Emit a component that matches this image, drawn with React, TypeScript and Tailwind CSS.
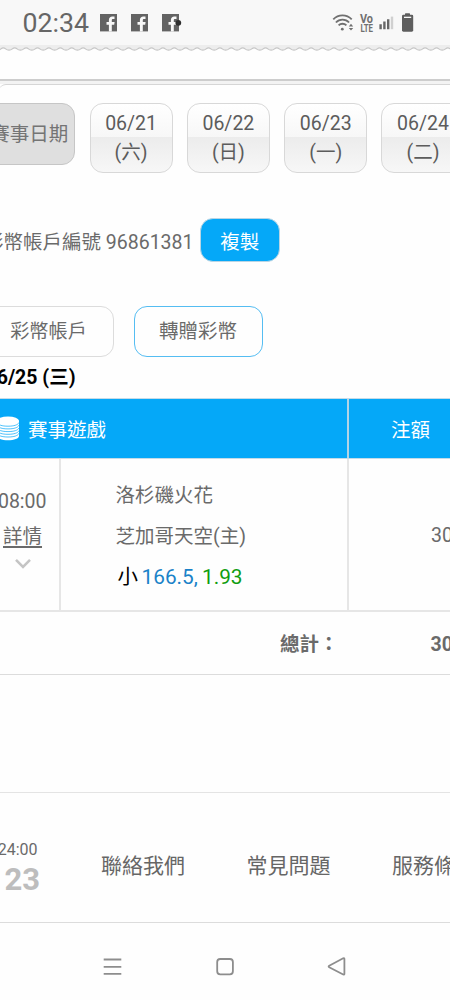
import type { ReactNode } from "react";

const DATES = [
  { date: "06/21", day: "(六)" },
  { date: "06/22", day: "(日)" },
  { date: "06/23", day: "(一)" },
  { date: "06/24", day: "(二)" },
];

const WAVE_STEP = 11.4;

function FacebookIcon({ dot = false }: { dot?: boolean }) {
  return (
    <svg width="20" height="18" viewBox="0 0 20 18" className="block">
      <rect x="0" y="0" width="17" height="17.4" fill="#636363" />
      <path
        d="M8.9 17.4v-6.7H6.5V8h2.4V6.1c0-2.5 1.4-3.7 3.5-3.7h2.1v2.5h-1.4c-1 0-1.3.5-1.3 1.3V8h2.8l-.4 2.7h-2.4v6.7z"
        fill="#f8f8f8"
      />
      {dot && <circle cx="16.3" cy="8.8" r="2.9" fill="#2e2e2e" />}
    </svg>
  );
}

function StatusBar() {
  return (
    <div className="flex h-[45px] items-center bg-[#f8f8f8] text-[#666]">
      <span className="ml-[22.5px] w-[77px] pt-px text-[26.7px] leading-none">02:34</span>
      <div className="flex gap-[11.3px]">
        <FacebookIcon />
        <FacebookIcon />
        <FacebookIcon dot />
      </div>

      <svg width="90" height="22" viewBox="0 0 90 22" className="mr-[34px] ml-auto block">
        {/* wifi */}
        <g fill="none" stroke="#707070" strokeWidth="1.8">
          <path d="M7.3 7.4a12.5 12.5 0 0 1 18.4 0" />
          <path d="M9.9 10.5a9 9 0 0 1 13.2 0" />
          <path d="M12.6 13.4a5.4 5.4 0 0 1 7.8 0" />
        </g>
        <circle cx="16.3" cy="17.2" r="1.4" fill="#707070" />
        <path d="m22.8 14.4 2.2-2.6 2.2 2.6zM22.8 16l2.2 2.6 2.2-2.6z" fill="#707070" />
        {/* volte */}
        <g fill="#707070" fontFamily="Roboto, sans-serif" fontWeight="700">
          <text x="34" y="10.8" fontSize="12" textLength="13" lengthAdjust="spacingAndGlyphs">
            Vo
          </text>
          <text x="34.4" y="20" fontSize="11.8" textLength="12.6" lengthAdjust="spacingAndGlyphs">
            LTE
          </text>
        </g>
        {/* signal */}
        <path d="M53.4 12.2h2.4v5h-2.4zM57.2 9.5h2.4v7.7h-2.4zM61 7.2h2.4v10H61z" fill="#666" />
        <path d="M64.8 4.6h2.4v12.6h-2.4z" fill="#d0d0d0" />
        {/* battery */}
        <rect x="79" y="1.2" width="5" height="3" rx="0.6" fill="#5e5e5e" />
        <rect x="76" y="2.7" width="11.2" height="17" rx="1.4" fill="#5e5e5e" />
        <rect x="78" y="4.7" width="7.2" height="1.3" fill="#f8f8f8" />
      </svg>
    </div>
  );
}

function WaveEdge() {
  let d = `M${9 - WAVE_STEP * 2} 5.2`;
  for (let i = -2; i < 40; i++) {
    const x = 9 + i * WAVE_STEP;
    d += ` C${x + 3.4} 5.2 ${x + 3.2} 2.8 ${x + WAVE_STEP / 2} 2.8`;
    d += ` S${x + 8} 5.2 ${x + WAVE_STEP} 5.2`;
  }
  return (
    <svg width="450" height="7" viewBox="0 0 450 7" className="block">
      <path d={`${d} V0 H-14 Z`} fill="#ededed" />
      <path d={d} fill="none" stroke="#c6c6c6" strokeWidth="1.2" />
    </svg>
  );
}

function DateTab({ date, day }: { date: string; day: string }) {
  return (
    <button
      type="button"
      className="flex h-[69.5px] w-[83px] shrink-0 flex-col items-center rounded-[13px] border border-[#d8d8d8] bg-[linear-gradient(#ffffff_0%,#f7f7f7_49%,#ececec_49%,#f7f7f7_100%)] pt-[6px] leading-[28px] text-[#5c5c5c]"
    >
      <span>{date}</span>
      <span className="pt-px">{day}</span>
    </button>
  );
}

function CoinsIcon() {
  return (
    <svg width="22" height="25" viewBox="0 0 22 25" className="block shrink-0">
      <path d="M0 4.5V20c0 2.4 4.9 4.3 11 4.3S22 22.4 22 20V4.5z" fill="#fff" />
      <g fill="none" stroke="#05a8f8" strokeWidth="0.7">
        <path d="M0 6.5c1 2.4 5 3.7 11 3.7s10-1.3 11-3.7" />
        <path d="M0 9.2c1 2.4 5 3.7 11 3.7s10-1.3 11-3.7" />
        <path d="M0 11.9c1 2.4 5 3.7 11 3.7s10-1.3 11-3.7" />
        <path d="M0 14.6c1 2.4 5 3.7 11 3.7s10-1.3 11-3.7" />
        <path d="M0 17.3c1 2.4 5 3.7 11 3.7s10-1.3 11-3.7" />
      </g>
      <ellipse cx="11" cy="4.7" rx="11" ry="4.3" fill="#fff" />
    </svg>
  );
}

function FooterLink({ children }: { children: ReactNode }) {
  return <a className="shrink-0 text-[21px] leading-[30px] text-[#666]">{children}</a>;
}

function BetTable() {
  return (
    <div>
      <div className="flex h-[61px] border-t border-b border-[#c4dbe8] bg-[#05a8f8] text-white">
        <div className="flex w-[349px] shrink-0 items-center gap-[9.5px] border-r-2 border-[#b4d4e6]">
          <div className="-ml-[3.5px]">
            <CoinsIcon />
          </div>
          <span className="pt-[5px]">賽事遊戲</span>
        </div>
        <div className="flex w-[123px] shrink-0 items-center justify-center pt-[5px]">注額</div>
      </div>

      <div className="flex h-[152.5px] border-b-2 border-[#e6e6e6]">
        <div className="flex w-[60.5px] shrink-0 flex-col border-r-2 border-[#e6e6e6] pt-[26px]">
          <div className="flex w-full justify-end pr-[12px] leading-[34px]">08:00</div>
          <div className="w-full pt-px pl-[3px] leading-[34px] underline decoration-[1.5px] underline-offset-[3px]">
            詳情
          </div>
          <svg width="18" height="12" viewBox="0 0 18 12" className="mt-[4px] ml-[13.5px] block">
            <path d="m2 1.8 7 7 7-7" fill="none" stroke="#c4c4c4" strokeWidth="2.6" />
          </svg>
        </div>
        <div className="w-[288.5px] shrink-0 border-r-2 border-[#e6e6e6] pt-[16px] pl-[55px] leading-[41.2px]">
          <div>洛杉磯火花</div>
          <div>芝加哥天空(主)</div>
          <div className="flex pl-[2px] text-[20.8px]">
            <span className="w-[24px] text-[20.5px] text-black">小</span>
            <span className="w-[60.5px] text-[#1a82c8]">166.5,</span>
            <span className="text-[#0f9d0f]">1.93</span>
          </div>
        </div>
        <div className="flex items-center pt-[2px] pl-[82px]">30</div>
      </div>

      <div className="flex h-[63.5px] items-center border-b border-[#dcdcdc] pt-[4px] font-bold">
        <span className="w-[430.5px] shrink-0 pl-[280px]">總計：</span>
        <span>30</span>
      </div>
    </div>
  );
}

function NavBar() {
  return (
    <div className="flex h-[77px] items-center pt-[10px]">
      <svg width="450" height="24" viewBox="0 0 450 24" fill="none" stroke="#8d8d8d" className="block">
        <path d="M103.7 4.5h17.6M103.7 11.8h17.6M103.7 18.9h17.6" strokeWidth="1.8" />
        <rect x="217.2" y="4" width="15.7" height="15.3" rx="3" strokeWidth="1.8" />
        <path
          d="M343.2 3.3 329.2 10.7q-1.2.8 0 1.6l14 7.2q1.2.4 1.2-.8V4.1q0-1.2-1.2-.8z"
          strokeWidth="1.8"
          strokeLinejoin="round"
        />
      </svg>
    </div>
  );
}

export default function App() {
  return (
    <div className="h-[1000px] w-[450px] overflow-hidden bg-[#fefefe] font-['Roboto','Noto_Sans_CJK_TC',sans-serif] text-[19.5px] text-[#6a6a6a]">
      <StatusBar />
      <WaveEdge />

      <div className="mt-[27px] h-[5px] border-t-2 border-[#cdcdcd] bg-[#f3f3f3]">
        <div className="mt-[3px] -ml-px h-[12px] rounded-tl-[7px] border-t border-[#d6d6d6] bg-[#fefefe]" />
      </div>

      {/* match dates */}
      <div className="mt-[19px] flex h-[70px] gap-[14.3px]">
        <button
          type="button"
          className="-ml-[17px] flex h-[62px] w-[92.3px] shrink-0 items-center justify-center rounded-[13px] border border-[#c6c6c6] bg-[#dfdfdf] pt-px whitespace-nowrap text-[#747474]"
        >
          賽事日期
        </button>
        {DATES.map((item) => (
          <DateTab key={item.date} date={item.date} day={item.day} />
        ))}
      </div>

      {/* account number */}
      <div className="mt-[45px] flex h-[44px] items-center">
        <div className="flex w-[193.5px] shrink-0 justify-end pt-[5px] whitespace-nowrap">
          彩幣帳戶編號 96861381
        </div>
        <button
          type="button"
          className="ml-[6.5px] h-[44px] w-[79.5px] rounded-[13px] border border-[#b9d5e4] bg-[#05a8f8] pt-[5px] text-white"
        >
          複製
        </button>
      </div>

      <div className="mt-[44px] flex h-[51px] gap-[19.5px]">
        <button
          type="button"
          className="-ml-[17px] w-[131px] shrink-0 rounded-[13px] border border-[#dcdcdc] pt-px text-[19.2px]"
        >
          彩幣帳戶
        </button>
        <button
          type="button"
          className="w-[129px] shrink-0 rounded-[13px] border border-[#55bdf2]"
        >
          轉贈彩幣
        </button>
      </div>

      <div className="flex h-[41px] w-[75.5px] items-center justify-end text-[19.5px] font-bold whitespace-nowrap text-black">
        06/25 (三)
      </div>

      <BetTable />

      <div className="h-[118px] border-b border-[#e4e4e4]" />

      <div className="flex h-[130px] items-center border-b border-[#dcdcdc] pt-[16px]">
        <div className="flex w-[101px] shrink-0 flex-col pt-[4px]">
          <div className="flex w-[37.5px] justify-end text-[16px] leading-[24px]">24:00</div>
          <div className="flex w-[40px] justify-end text-[31px] leading-[35px] font-bold text-[#bdbdbd]">23</div>
        </div>
        <div className="flex gap-[61.5px] pt-px">
          <FooterLink>聯絡我們</FooterLink>
          <FooterLink>常見問題</FooterLink>
          <FooterLink>服務條款</FooterLink>
        </div>
      </div>

      <NavBar />
    </div>
  );
}
